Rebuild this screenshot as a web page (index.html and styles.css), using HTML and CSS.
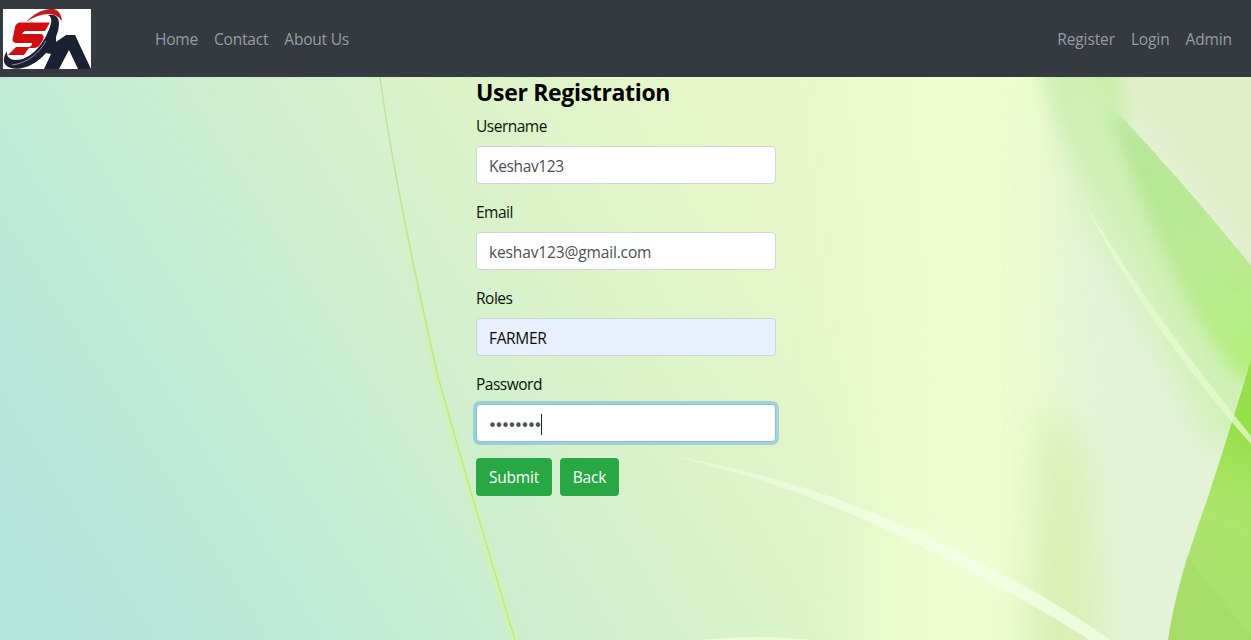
FILE: index.html
```html
<!DOCTYPE html>
<html lang="en">
<head>
<meta charset="utf-8">
<title>User Registration</title>
<link rel="stylesheet" href="styles.css">
</head>
<body>
<header class="navbar">
  <a class="brand" href="#" aria-label="SA">
    <svg class="logo" viewBox="0 0 88 60" aria-hidden="true">
      <rect width="88" height="60" fill="#fff"/>
      <path d="M23 13C32 3 44-1 51 0Q58 2 59 12Q54 5 46 5Q35 5 23 13Z" fill="#c41920"/>
      <path d="M17 13.500H47L42 22H22Q20 23 19 25H38Q42 26 40 31L36 37Q34 39 31 39H26L21 46H5L13 38H26Q29 37 29 34H13Q8 33 10 28L12 18Q13 14 17 13.500Z" fill="#d00d10"/>
      <path d="M45 6Q56 4 56 15Q56 21 53 28L53 33L63 26H72L88 60H75L66 41L56 60H41L48 45L43 44C34 55 19 62 8 59Q-4 55 4 42Q3 51 13 51C26 51 38 38 44 25C49 14 50 9 45 6Z" fill="#1b2033"/>
      <path d="M9 56C25 54 36 44 43 32" fill="none" stroke="#fff" stroke-width=".5"/>
    </svg>
  </a>
  <nav class="links">
    <a class="link" href="#">Home</a>
    <a class="link" href="#">Contact</a>
    <a class="link" href="#">About Us</a>
  </nav>
  <nav class="links links-end">
    <a class="link" href="#">Register</a>
    <a class="link" href="#">Login</a>
    <a class="link" href="#">Admin</a>
  </nav>
</header>
<main class="page">
  <svg class="backdrop" viewBox="0 77 1251 563" preserveAspectRatio="none" aria-hidden="true">
    <defs>
      <linearGradient id="base" gradientUnits="userSpaceOnUse" x1="60" y1="620" x2="760" y2="180">
        <stop offset="0" stop-color="#b6e5dc"/>
        <stop offset=".28" stop-color="#c0e9d6"/>
        <stop offset=".5" stop-color="#ceeece"/>
        <stop offset=".75" stop-color="#dcf3ca"/>
        <stop offset="1" stop-color="#e7f7ca"/>
      </linearGradient>
      <linearGradient id="leaf" gradientUnits="userSpaceOnUse" x1="1130" y1="120" x2="1251" y2="350">
        <stop offset="0" stop-color="#b4e596"/>
        <stop offset=".6" stop-color="#bcea94"/>
        <stop offset="1" stop-color="#b6ef80"/>
      </linearGradient>
      <linearGradient id="blade" gradientUnits="userSpaceOnUse" x1="1180" y1="600" x2="1262" y2="440">
        <stop offset="0" stop-color="#abdf70"/>
        <stop offset=".55" stop-color="#ade56c"/>
        <stop offset="1" stop-color="#98df4c"/>
      </linearGradient>
      <linearGradient id="ray" gradientUnits="userSpaceOnUse" x1="668" y1="455" x2="900" y2="530">
        <stop offset="0" stop-color="#f2ffe4" stop-opacity=".4"/>
        <stop offset="1" stop-color="#f2ffe4" stop-opacity=".85"/>
      </linearGradient>
      <filter id="wide" filterUnits="userSpaceOnUse" x="600" y="-100" width="900" height="900"><feGaussianBlur stdDeviation="34"/></filter>
      <filter id="mid" filterUnits="userSpaceOnUse" x="900" y="-50" width="500" height="800"><feGaussianBlur stdDeviation="18"/></filter>
      <filter id="fine" filterUnits="userSpaceOnUse" x="900" y="-50" width="500" height="800"><feGaussianBlur stdDeviation="9"/></filter>
      <clipPath id="edge"><path d="M1000 77H1081L1120 115Q1190 190 1251 266V640H1000Z"/></clipPath>
    </defs>
    <rect y="77" width="1251" height="563" fill="url(#base)"/>
    <path d="M840 0H1060V720H860Q900 400 840 0Z" fill="#eefdd2" filter="url(#wide)"/>
    <path d="M1070 100Q1035 330 1080 700H1300V100Z" fill="#e4f3d8" filter="url(#wide)"/>
    <path d="M1045 410Q1080 420 1088 500L1100 680H1025Z" fill="#d5eeae" opacity=".85" filter="url(#mid)"/>
    <path d="M1090 60H1270V290Z" fill="#e2eecb" filter="url(#fine)"/>
    <path d="M1036 60H1100L1130 112L1110 200Q1065 160 1036 60Z" fill="#ceefb2" filter="url(#fine)"/>
    <g clip-path="url(#edge)">
      <path d="M1060 90L1120 110L1260 265V440L1215 450Q1160 330 1090 210Z" fill="#cff0b5" filter="url(#mid)"/>
      <path d="M1108 105L1285 270V380H1240Q1175 300 1132 170Z" fill="url(#leaf)" filter="url(#fine)"/>
      <path d="M1120 115L1290 266V400L1226 320Q1180 260 1132 150Z" fill="url(#leaf)" opacity=".7" filter="url(#fine)"/>
    </g>
    <path d="M1082 65H1116Q1118 90 1125 110Z" fill="#c7eba0" filter="url(#fine)"/>
    <path d="M1251 360Q1230 430 1206 503Q1176 585 1168 640H1251Z" fill="url(#blade)"/>
    <path d="M1187 555Q1220 600 1251 636V640H1168Q1173 605 1187 555Z" fill="#a1d660" opacity=".35"/>
    <path d="M1080 195Q1148 310 1251 436V444Q1145 325 1080 195Z" fill="#e6fbd0" opacity=".75"/>
    <path d="M668 455Q820 481 950 548Q1040 590 1110 640H1090Q1020 596 940 556Q810 487 668 455Z" fill="url(#ray)"/>
    <path d="M700 640Q760 634 810 640Z" fill="#eaffd8"/>
    <path d="M379 77Q396 187 440 377Q478 508 519 640H511Q471 508 434 377Q394 187 379 77Z" fill="#cff2ac"/>
    <path d="M380 77Q395 187 438 377Q475 508 515 640" fill="none" stroke="#b7e39b" stroke-width="1.2"/>
  </svg>
  <form class="form">
    <h1 class="title">User Registration</h1>
    <label class="label" for="username">Username</label>
    <input class="field" id="username" value="Keshav123">
    <label class="label" for="email">Email</label>
    <input class="field email" id="email" value="keshav123@gmail.com">
    <label class="label" for="roles">Roles</label>
    <input class="field autofilled" id="roles" value="FARMER">
    <span class="label">Password</span>
    <div class="field focused" role="textbox" aria-label="Password"><span class="dots">••••••••</span><span class="caret"></span></div>
    <div class="actions">
      <button class="btn submit" type="button">Submit</button>
      <button class="btn back" type="button">Back</button>
    </div>
  </form>
</main>
</body>
</html>
```
FILE: styles.css
```css
* { box-sizing: border-box; }
body {
  margin: 0;
  height: 640px;
  overflow: hidden;
  display: flex;
  flex-direction: column;
  font: 15.5px/24px "Open Sans", "Noto Sans", sans-serif;
  color: #0b1408;
}
.navbar {
  height: 77px;
  display: flex;
  align-items: center;
  padding: 1px 19px 0 3px;
  background: #343a40;
}
.brand { display: flex; width: 152px; }
.logo { width: 88px; height: 60px; }
.links { display: flex; gap: 16px; letter-spacing: -.2px; }
.links-end { margin-left: auto; letter-spacing: -.12px; }
.link {
  color: #9a9da0;
  text-decoration: none;
  white-space: nowrap;
}
.page { position: relative; flex: 1; }
.backdrop {
  position: absolute;
  inset: 0;
  width: 100%;
  height: 100%;
}
.form {
  position: relative;
  width: 300px;
  margin: 0 auto 0 476px;
}
.title {
  margin: 0 0 8px;
  padding-top: 1px;
  height: 29px;
  font-size: 23px;
  line-height: 29px;
  font-weight: 700;
  letter-spacing: -.33px;
  color: #000;
  white-space: nowrap;
}
.label {
  display: block;
  height: 24px;
  margin-bottom: 8px;
  letter-spacing: -.5px;
}
.field {
  display: flex;
  align-items: center;
  width: 300px;
  height: 38px;
  margin: 0 0 16px;
  padding: 2px 12px 0;
  border: 1px solid #ced4da;
  border-radius: 4px;
  background: #fff;
  color: #495057;
  font: inherit;
  letter-spacing: -.35px;
}
.email { letter-spacing: -.14px; }
.autofilled { background: #e8f0fe; color: #0b0b0b; }
.focused {
  border-color: #80bdff;
  box-shadow: 0 0 0 3px rgba(80, 165, 225, .42);
}
.dots {
  margin-left: -1px;
  padding-top: 4px;
  font-family: "DejaVu Sans", sans-serif;
  font-size: 15px;
  letter-spacing: -2.35px;
}
.caret { width: 1px; height: 21px; margin-left: 1px; background: #20262c; }
.actions { display: flex; gap: 8px; }
.btn {
  height: 38px;
  padding: 0;
  border: 0;
  border-radius: 4px;
  background: #28a745;
  color: #fff;
  font: inherit;
  letter-spacing: -.2px;
}
.submit { width: 76px; }
.back { width: 59px; }
```
